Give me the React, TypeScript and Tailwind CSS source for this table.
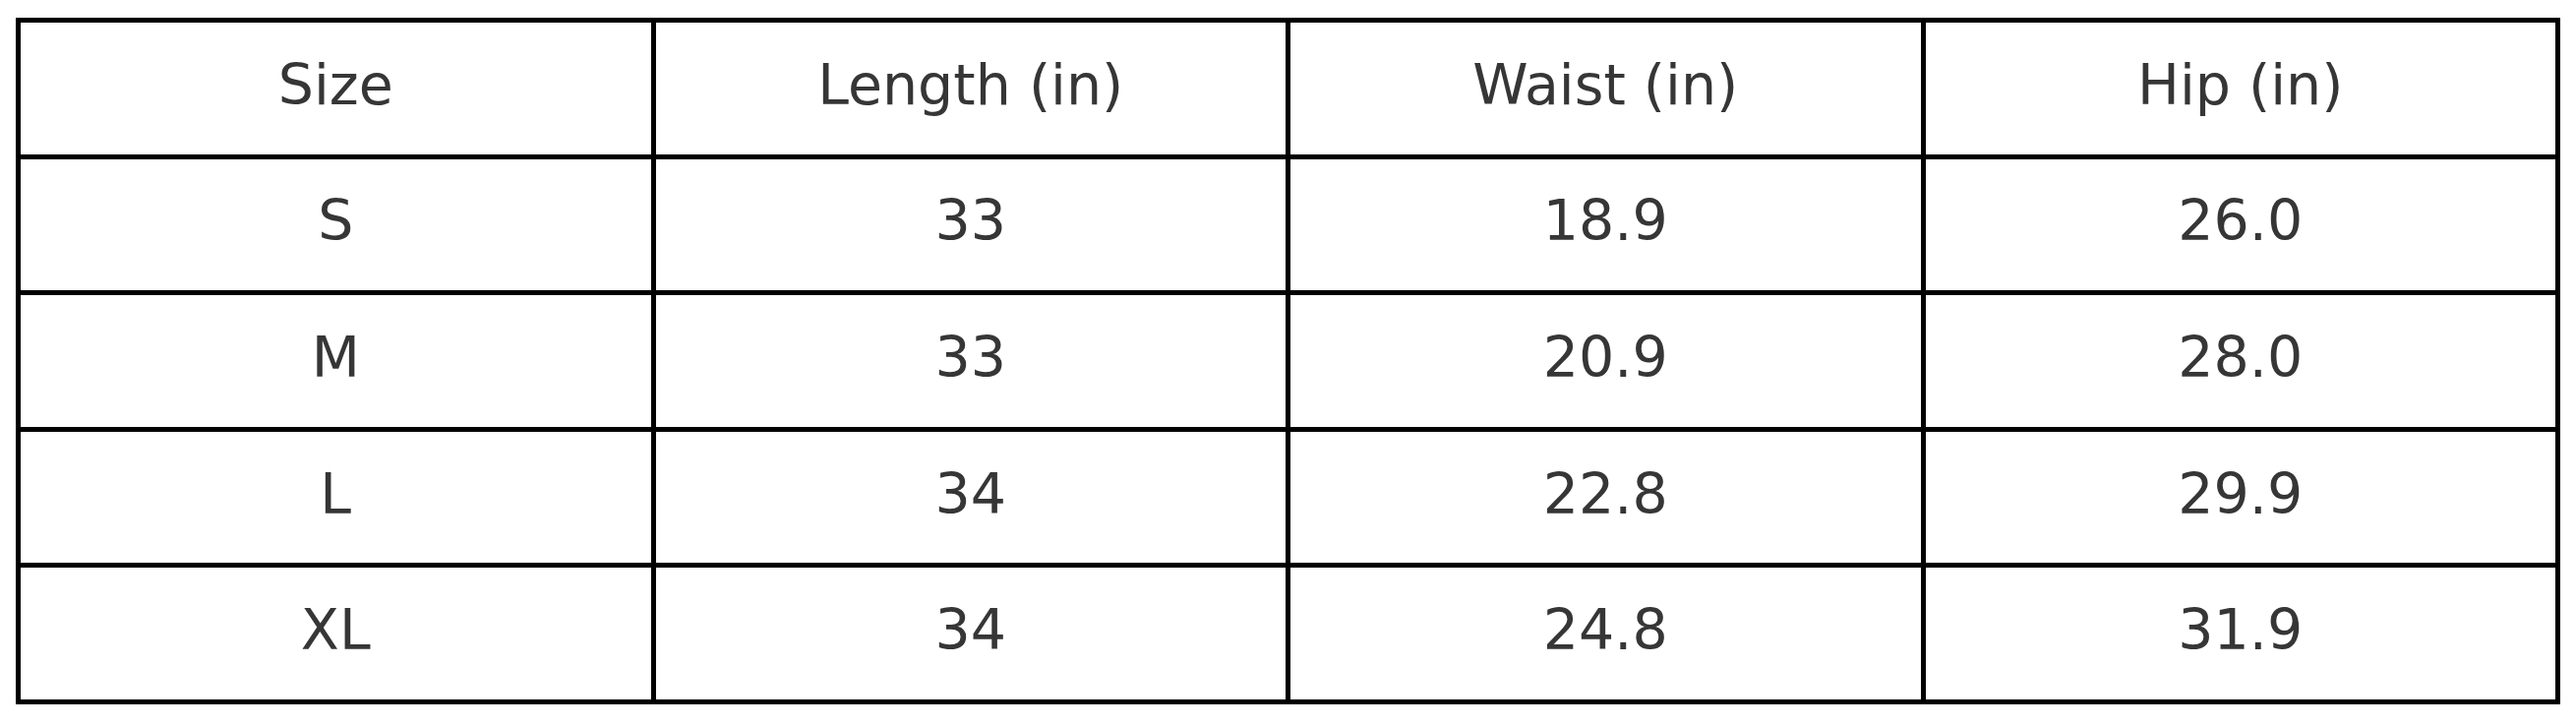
const headers = ["Size", "Length (in)", "Waist (in)", "Hip (in)"];

const rows = [
  ["S", "33", "18.9", "26.0"],
  ["M", "33", "20.9", "28.0"],
  ["L", "34", "22.8", "29.9"],
  ["XL", "34", "24.8", "31.9"],
];

const Cell = ({ children }: { children: React.ReactNode }) => (
  <div className="flex items-center justify-center border-r-[5px] border-b-[5px] border-black pb-[7px] text-[57px] leading-none text-[#363636]">
    {children}
  </div>
);

export default function App() {
  return (
    <div className="min-h-screen w-full bg-white pt-[18px] pl-[16px]" style={{ fontFamily: '"DejaVu Sans", sans-serif' }}>
      <div className="grid h-[698px] w-[2587px] grid-cols-4 grid-rows-5 border-l-[5px] border-t-[5px] border-black">
        {headers.map((h) => (
          <Cell key={h}>{h}</Cell>
        ))}
        {rows.map((row, i) =>
          row.map((v, j) => <Cell key={`${i}-${j}`}>{v}</Cell>)
        )}
      </div>
    </div>
  );
}
